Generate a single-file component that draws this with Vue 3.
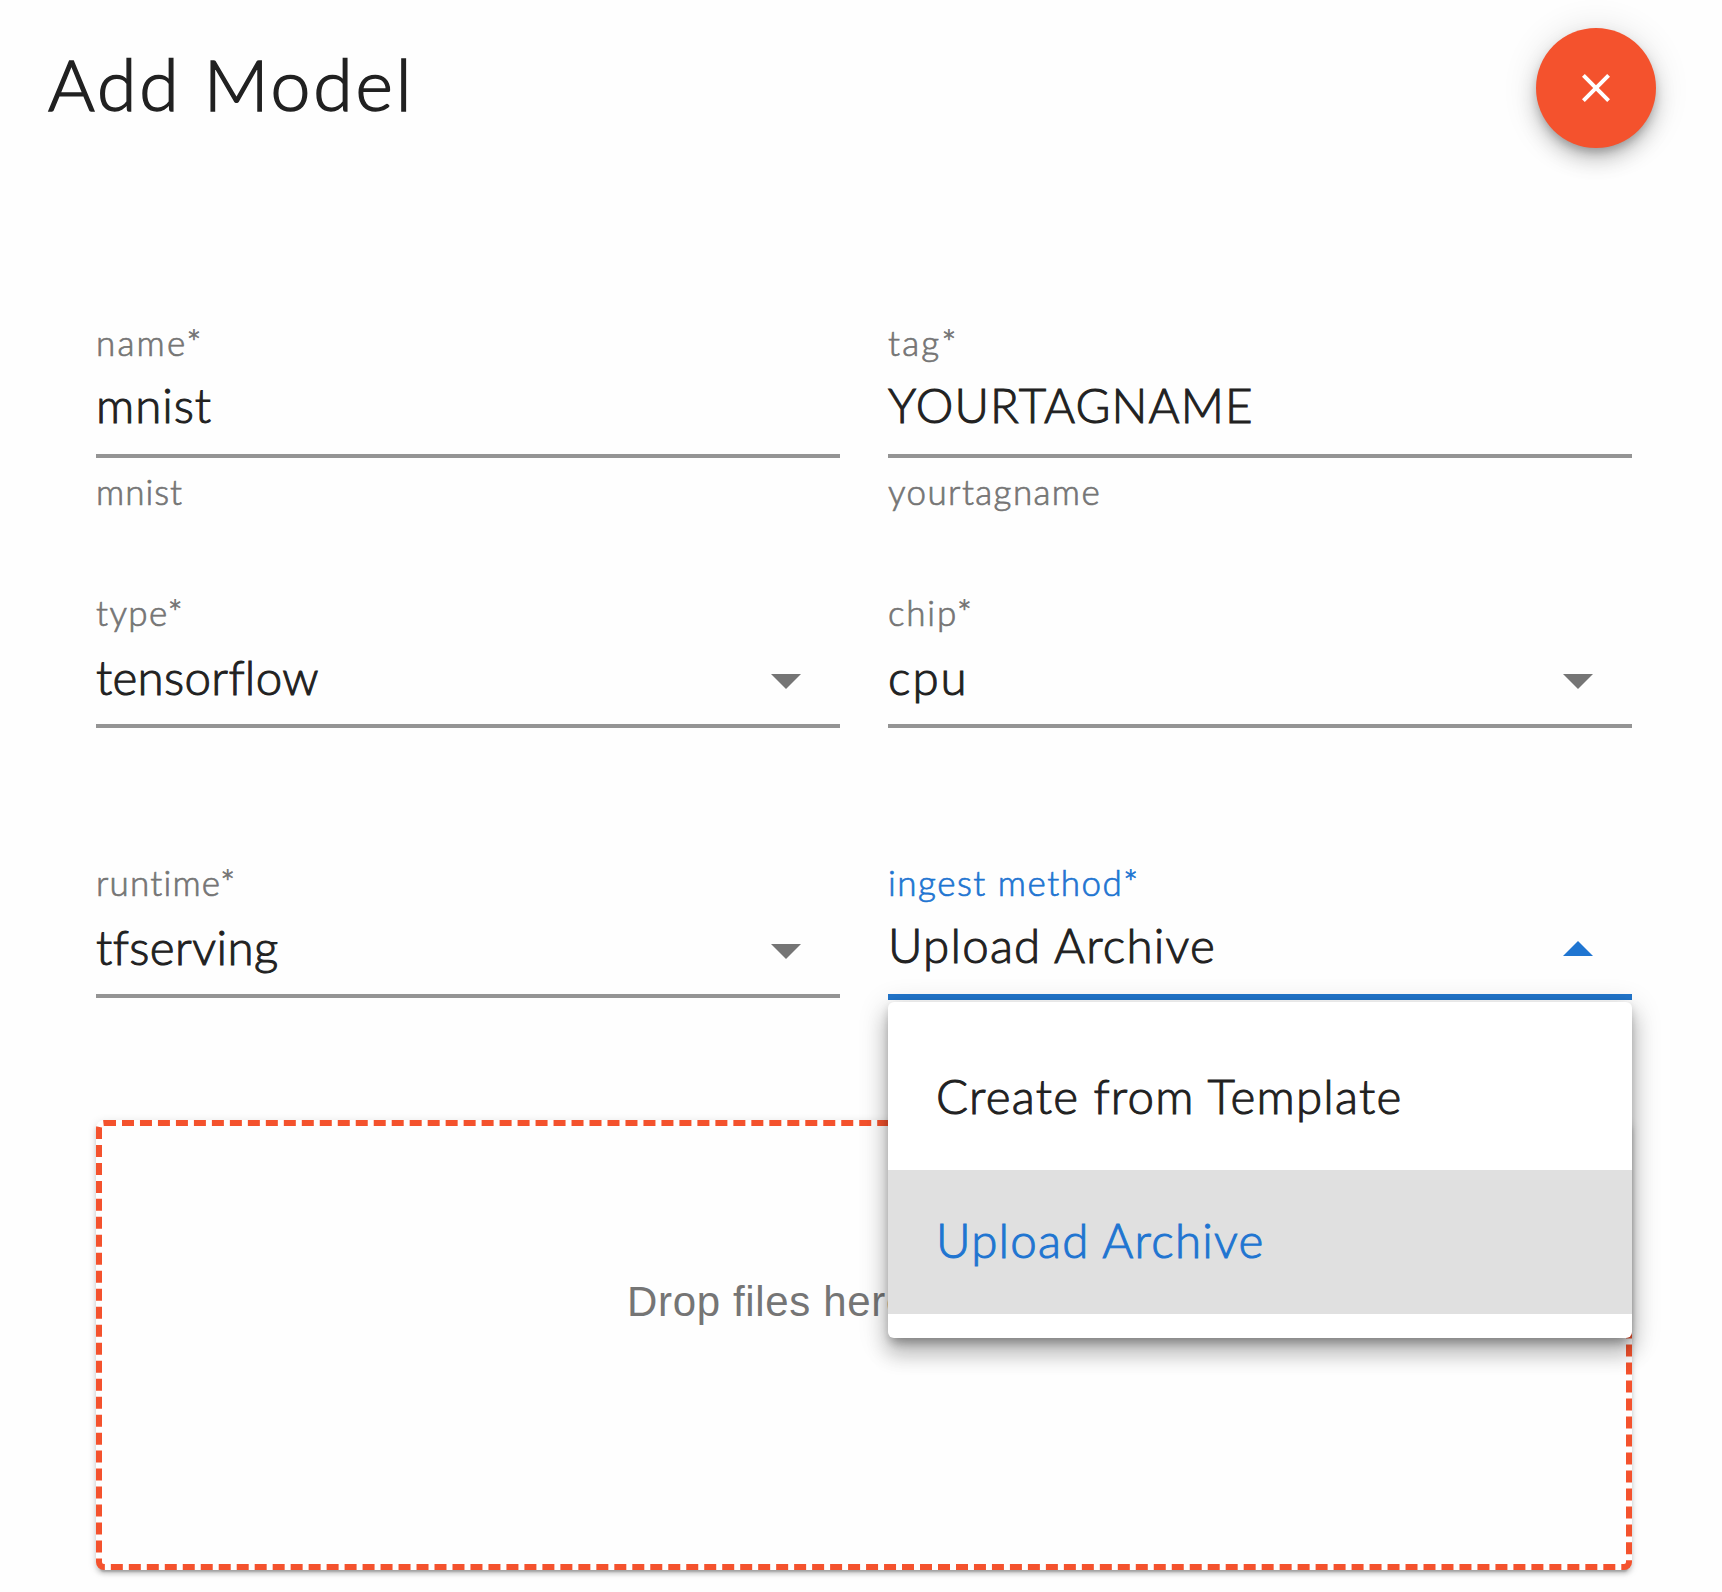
<script setup>
const fields = [
  { id: 'name', label: 'name*', value: 'mnist', hint: 'mnist' },
  { id: 'tag', label: 'tag*', value: 'YOURTAGNAME', hint: 'yourtagname' },
  { id: 'type', label: 'type*', value: 'tensorflow', select: true },
  { id: 'chip', label: 'chip*', value: 'cpu', select: true },
  { id: 'runtime', label: 'runtime*', value: 'tfserving', select: true },
  {
    id: 'ingest',
    label: 'ingest method*',
    value: 'Upload Archive',
    select: true,
    open: true,
    options: ['Create from Template', 'Upload Archive'],
  },
]
</script>

<template>
  <main class="page">
    <header class="header">
      <h1 class="title">Add Model</h1>
      <button class="fab" type="button" aria-label="Close">
        <svg viewBox="0 0 24 24" width="48" height="48">
          <path
            fill="#fff"
            d="M19 6.41L17.59 5 12 10.59 6.41 5 5 6.41 10.59 12 5 17.59 6.41 19 12 13.41 17.59 19 19 17.59 13.41 12z"
          />
        </svg>
      </button>
    </header>

    <section class="fields">
      <div
        v-for="f in fields"
        :key="f.id"
        class="field"
        :class="[f.id, { select: f.select, open: f.open }]"
      >
        <div class="label">{{ f.label }}</div>
        <div class="control">
          <span class="value">{{ f.value }}</span>
          <svg v-if="f.select" class="arrow" viewBox="0 0 30 15" width="30" height="15">
            <path :d="f.open ? 'M0 15L15 0L30 15z' : 'M0 0L15 15L30 0z'" fill="currentColor" />
          </svg>
        </div>
        <div class="line"></div>
        <div v-if="f.hint" class="hint">{{ f.hint }}</div>
        <ul v-if="f.options" class="menu">
          <li
            v-for="o in f.options"
            :key="o"
            class="option"
            :class="{ selected: o === f.value }"
          >
            {{ o }}
          </li>
        </ul>
      </div>
    </section>

    <section class="dropzone">Drop files here to upload</section>
  </main>
</template>

<style>
body {
  background: #fefefe;
}
</style>

<style scoped>
.page {
  box-sizing: border-box;
  width: 1722px;
  height: 1592px;
  overflow: hidden;
  padding-top: 28px;
  color: #212121;
  font-family: Lato, "Open Sans", sans-serif;
  font-weight: 300;
  -webkit-text-stroke: 1px currentColor;
}

.header {
  display: flex;
  justify-content: space-between;
  align-items: flex-start;
  height: 296px;
  padding: 0 66px 0 48px;
}

.title {
  margin: 19px 0 0;
  font-size: 71.5px;
  line-height: 72px;
  font-weight: 300;
  letter-spacing: 2.9px;
  -webkit-text-stroke-width: 1.5px;
}

.fab {
  display: flex;
  align-items: center;
  justify-content: center;
  width: 120px;
  height: 120px;
  padding: 0;
  border: 0;
  border-radius: 50%;
  background: #f4522d;
  box-shadow:
    0 6px 10px -2px rgba(0, 0, 0, 0.24),
    0 12px 20px 0 rgba(0, 0, 0, 0.18),
    0 2px 36px 0 rgba(0, 0, 0, 0.12);
}

.fields {
  display: grid;
  grid-template-columns: 744px 744px;
  grid-template-rows: 270px 270px 256px;
  column-gap: 48px;
  padding-left: 96px;
}

.field {
  position: relative;
}

.label,
.hint {
  font-size: 35px;
  line-height: 36px;
  letter-spacing: 1.4px;
  color: #757575;
  white-space: nowrap;
  -webkit-text-stroke-width: 0.7px;
}

.control {
  display: flex;
  justify-content: space-between;
  box-sizing: border-box;
  height: 94px;
  padding: 21px 39px 0 0;
}

.select:not(.open) .control {
  padding-top: 23px;
}

.value {
  font-size: 47.5px;
  line-height: 48px;
  letter-spacing: 1.2px;
  white-space: nowrap;
}

.arrow {
  margin-top: 21px;
  color: #757575;
}

.open .arrow {
  margin-top: 20px;
  color: #1f75d1;
}

.line {
  height: 4px;
  background: #949494;
}

.hint {
  margin-top: 15px;
}

.open .line {
  height: 6px;
  background: #2175cb;
}

.open .label {
  color: #1f75d1;
}

.name .label {
  letter-spacing: 2.2px;
}

.tag .label {
  letter-spacing: 2.2px;
}

.chip .label {
  letter-spacing: 1.8px;
}

.name .value {
  letter-spacing: 0.9px;
}

.type .value {
  letter-spacing: 0.3px;
}

.chip .value {
  letter-spacing: 2px;
}

.runtime .label {
  letter-spacing: 1.2px;
}

.runtime .value {
  letter-spacing: 0.4px;
}

.ingest .label {
  letter-spacing: 1.5px;
}

.name .hint {
  letter-spacing: 1px;
}

.tag .value {
  letter-spacing: 1.1px;
}

.menu {
  position: absolute;
  z-index: 2;
  top: 138px;
  left: 0;
  box-sizing: border-box;
  width: 744px;
  height: 336px;
  margin: 0;
  padding: 24px 0;
  list-style: none;
  border-radius: 6px;
  background: #fff;
  box-shadow:
    0 10px 10px -6px rgba(0, 0, 0, 0.2),
    0 16px 20px 2px rgba(0, 0, 0, 0.18),
    0 6px 28px 4px rgba(0, 0, 0, 0.14),
    0 4px 8px 0 rgba(0, 0, 0, 0.14);
}

.option {
  height: 144px;
  padding-left: 48px;
  font-size: 47.5px;
  line-height: 139px;
  letter-spacing: 1.25px;
}

.option,
.menu {
  box-sizing: border-box;
}

.option.selected {
  background: #e0e0e0;
  color: #1f75d1;
}

.dropzone {
  box-sizing: border-box;
  width: 1536px;
  height: 450px;
  margin-left: 96px;
  padding-top: 152px;
  border: 6px dashed #f4522d;
  border-radius: 8px;
  color: #757575;
  font: 400 42px/48px "Liberation Sans", Arial, sans-serif;
  letter-spacing: 0.65px;
  text-align: center;
  -webkit-text-stroke-width: 0;
  box-shadow:
    0 6px 2px -4px rgba(0, 0, 0, 0.2),
    0 4px 4px 0 rgba(0, 0, 0, 0.14),
    0 2px 10px 0 rgba(0, 0, 0, 0.12);
  background: #fefefe;
}
</style>
